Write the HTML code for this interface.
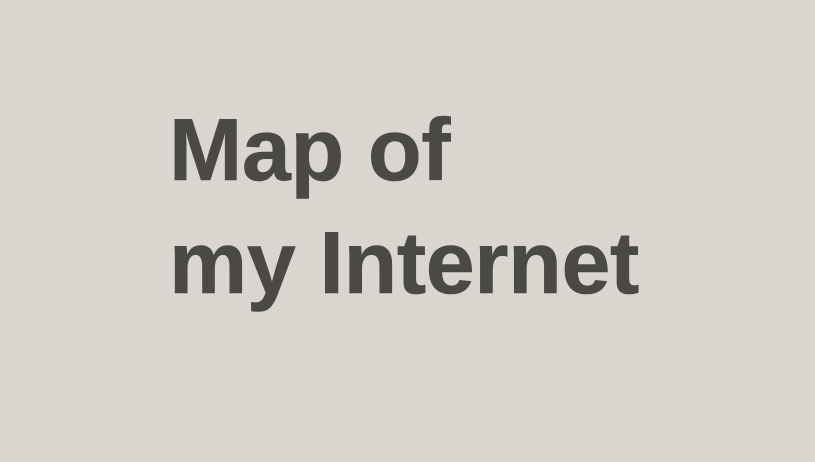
<!DOCTYPE html>
<html><head><style>
html,body{margin:0;padding:0;width:815px;height:462px;background:#d9d5cf;overflow:hidden}
.t{position:absolute;left:169px;font-family:"Liberation Sans",sans-serif;font-weight:bold;font-size:88px;color:#4b4945;line-height:1;white-space:nowrap;letter-spacing:-0.4px;-webkit-text-stroke:0.6px #4b4945}
</style></head><body>
<div class="t" style="top:106px">Map of</div>
<div class="t" style="top:219px">my Internet</div>
</body></html>
